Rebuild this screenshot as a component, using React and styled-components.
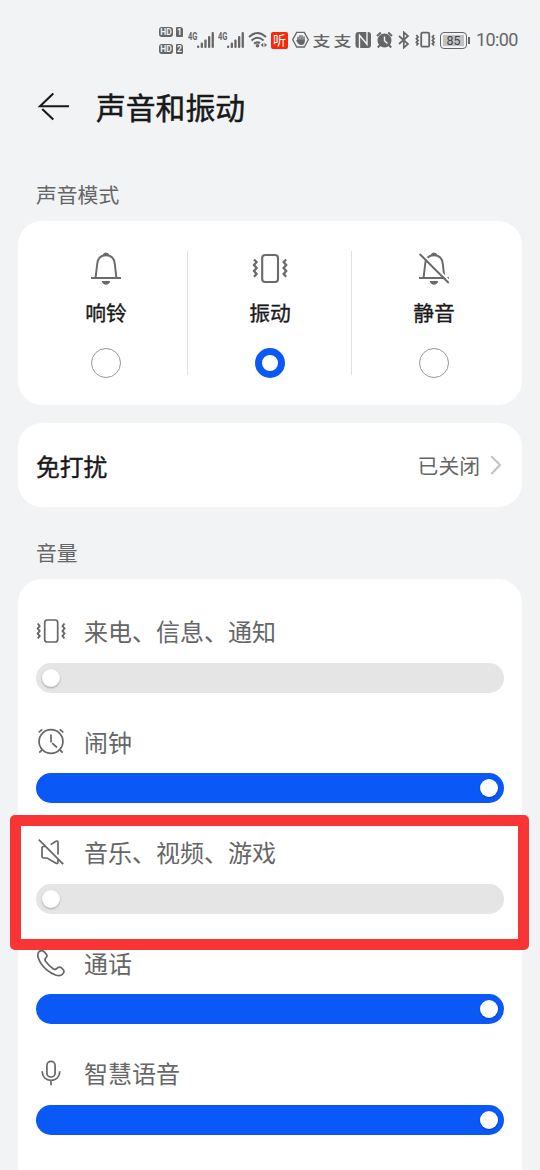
import styled, { createGlobalStyle } from "styled-components";

const modes = [
  { id: "ring", name: "响铃", icon: <BellIcon /> },
  { id: "vibrate", name: "振动", icon: <VibrateIcon />, checked: true },
  { id: "silent", name: "静音", icon: <BellIcon off /> },
];

const volumes = [
  { name: "来电、信息、通知", icon: <SmallVibrateIcon />, value: 0 },
  { name: "闹钟", icon: <AlarmIcon />, value: 100 },
  { name: "音乐、视频、游戏", icon: <SpeakerOffIcon />, value: 0, marked: true },
  { name: "通话", icon: <PhoneIcon />, value: 100 },
  { name: "智慧语音", icon: <MicIcon />, value: 100 },
];

const App = () => {
  return (
    <Page>
      <GlobalStyle />
      <StatusBar>
        <SimCards>
          <SimRow><Hd>HD</Hd><Sim>1</Sim></SimRow>
          <SimRow><Hd>HD</Hd><Sim>2</Sim></SimRow>
        </SimCards>
        <Signal />
        <Signal />
        <WifiIcon />
        <AppBadge>听</AppBadge>
        <HandIcon />
        <PayMark>支</PayMark>
        <PayMark>支</PayMark>
        <NfcIcon />
        <StatusAlarmIcon />
        <BluetoothIcon />
        <StatusVibrateIcon />
        <Battery><BatteryBody><span>85</span></BatteryBody><BatteryTip /></Battery>
        <Clock>10:00</Clock>
      </StatusBar>

      <Header>
        <svg width="32" height="30" viewBox="38 92 32 30" fill="none" stroke="#191919" strokeWidth="2.1">
          <path d="M53.3 93.5 40 106.3H69M42.2 108.9 53.3 119.6" />
        </svg>
        <Title>声音和振动</Title>
      </Header>

      <SectionLabel>声音模式</SectionLabel>
      <ModeCard>
        {modes.map((mode, i) => (
          <ModeCell key={mode.id}>
            {i > 0 && <Divider />}
            <Mode>
              {mode.icon}
              <ModeName>{mode.name}</ModeName>
              <Radio $checked={mode.checked} />
            </Mode>
          </ModeCell>
        ))}
      </ModeCard>

      <LinkCard>
        <LinkTitle>免打扰</LinkTitle>
        <LinkValue>已关闭</LinkValue>
        <svg width="12" height="22" viewBox="490 454 12 22" fill="none" stroke="#c2c2c2" strokeWidth="2">
          <path d="M491.3 456.2 500 465 491.3 474" />
        </svg>
      </LinkCard>

      <SectionLabel $second>音量</SectionLabel>
      <VolumeCard>
        {volumes.map((item) => (
          <VolumeRow key={item.name}>
            <VolumeHead>
              {item.icon}
              <VolumeName>{item.name}</VolumeName>
            </VolumeHead>
            <Track $full={item.value === 100}>
              <Knob />
            </Track>
            {item.marked && <Frame />}
          </VolumeRow>
        ))}
      </VolumeCard>
    </Page>
  );
};
export default App;

function BellIcon({ off }) {
  return (
    <svg width="34" height="36" viewBox="89 251 34 36" fill="none" stroke="#6b6b6b" strokeWidth="2">
      <path d="M95.6 277.5 97.2 264C97.7 258 101 255.2 106 255.2S114.3 258 114.8 264L116.4 277.5" />
      <path d="M91 278H121" />
      <path d="M102.7 255.3C103.5 251.5 108.5 251.5 109.3 255.3ZM101.8 281H110.2C109.3 286 102.7 286 101.8 281Z" fill="#6b6b6b" stroke="none" />
      {off && <path d="M93 252.5 122 281.5" stroke="#fff" strokeWidth="2" />}
      {off && <path d="M91.7 254 120.7 283" />}
    </svg>
  );
}

function VibrateIcon() {
  return (
    <svg width="36" height="36" viewBox="252 251 36 36" fill="none" stroke="#6b6b6b" strokeWidth="2.1">
      <rect x="262.2" y="255" width="15.8" height="27" rx="3" />
      <path d="M254 259.5 256.6 262 254 265 256.6 268 254 271 256.6 274 254 276.8M286.2 259.5 283.6 262 286.2 265 283.6 268 286.2 271 283.6 274 286.2 276.8" strokeWidth="2.3" />
    </svg>
  );
}

function SmallVibrateIcon() {
  return (
    <svg width="30" height="30" viewBox="36 616 30 30" fill="none" stroke="#666" strokeWidth="1.7">
      <rect x="44.7" y="620" width="13" height="22" rx="2.6" />
      <path d="M37.7 623.5 39.7 626 37.7 628.5 39.7 631 37.7 633.5 39.7 636 37.7 638.3M64.5 623.5 62.5 626 64.5 628.5 62.5 631 64.5 633.5 62.5 636 64.5 638.3" strokeWidth="1.9" />
    </svg>
  );
}

function AlarmIcon() {
  return (
    <svg width="30" height="30" viewBox="36 727 30 30" fill="none" stroke="#666" strokeWidth="1.7">
      <circle cx="51" cy="741.5" r="11.9" />
      <path d="M51 734.5V742.5M52.2 743.2 57 747.5M38.7 732.3 42.3 729.3M63.3 732.3 59.7 729.3M42 749.8 39.3 752.7M60 749.8 62.7 752.7" />
    </svg>
  );
}

function SpeakerOffIcon() {
  return (
    <svg width="30" height="30" viewBox="36 837 30 30" fill="none" stroke="#666" strokeWidth="1.7">
      <path d="M45 846.5H43.5Q42 846.5 42 848V856.5Q42 858 43.5 858H47L56 863.2Q58 864 58 862V859.5M50.7 844.6 56 841.3Q58 840.4 58 842.5V854.5" />
      <path d="M38.8 839.7 63.2 864.2" />
    </svg>
  );
}

function PhoneIcon() {
  return (
    <svg width="30" height="30" viewBox="36 948 30 30" fill="none" stroke="#666" strokeWidth="1.7">
      <path d="M39.5 951.2Q41.8 949.7 44 951.7L46.2 954Q47.8 956 46 957.7C44.5 959 44.7 960 45.7 961.5Q49.5 966.5 53.5 969C55 969.9 55.9 969.8 57 968.3Q58.8 966.2 61 967.5L63.3 969.7Q64.8 971.8 63 973.7C61 976 58.5 976 55.5 975Q46.5 971.5 41 963.5C38.5 959.5 36.3 954 39.5 951.2Z" />
    </svg>
  );
}

function MicIcon() {
  return (
    <svg width="30" height="30" viewBox="36 1058 30 30" fill="none" stroke="#666" strokeWidth="1.7">
      <rect x="46.9" y="1061.3" width="8.2" height="15.7" rx="4.1" />
      <path d="M42.2 1071.3C42.2 1077 46 1080.4 51 1080.4S59.8 1077 59.8 1071.3M51 1080.4V1085.3" />
    </svg>
  );
}

function Signal() {
  return (
    <SignalBox>
      <small>4G</small>
      <svg width="18" height="17" viewBox="0 0 18 17" fill="#666">
        <rect x="0" y="13.5" width="2.3" height="2.5" rx="1" />
        <rect x="3.7" y="10.5" width="2.3" height="5.5" rx="1" />
        <rect x="7.3" y="7.5" width="2.3" height="8.5" rx="1" />
        <rect x="11" y="4" width="2.3" height="12" rx="1" />
        <rect x="14.6" y="0" width="2.3" height="16" rx="1" />
      </svg>
    </SignalBox>
  );
}

function WifiIcon() {
  return (
    <svg width="19" height="18" viewBox="248.500 30.500 19 18" fill="none" stroke="#666" strokeWidth="2">
      <path d="M249.5 36.5Q258 28.5 266.5 36.5M252 40Q258 34.6 264 40M254.7 43.3Q258 40.7 260.5 42.8" />
      <circle cx="258" cy="45.3" r="1.8" fill="#666" stroke="none" />
      <path d="M263.8 42.3V46.7L261.2 44.5ZM265 42.3V46.7L267.6 44.5Z" fill="#666" stroke="none" />
    </svg>
  );
}

function HandIcon() {
  return (
    <svg width="17" height="18" viewBox="292 31 17 18" fill="none" stroke="#666" strokeWidth="1.3">
      <path d="M296.7 32.4H304.3L308.3 39.7 304.3 47H296.7L292.7 39.7Z" />
      <path d="M298 41V37.3M300 40V35.6M302 40V35.6M304 41V37" strokeWidth="1.4" strokeLinecap="round" />
      <path d="M297.3 39.5H304.7V41.5Q304.7 45 301 45 298.8 45 296.2 40.7Z" fill="#666" stroke="none" />
    </svg>
  );
}

function NfcIcon() {
  return (
    <svg width="17" height="18" viewBox="355.5 30.5 17 18">
      <rect x="356" y="31.5" width="15.5" height="16" rx="3" fill="#666" />
      <path d="M360 47.5V34.8L367.5 43.8V31.5" fill="none" stroke="#f1f3f5" strokeWidth="1.4" />
    </svg>
  );
}

function StatusAlarmIcon() {
  return (
    <svg width="17" height="18" viewBox="376.5 30.5 17 18" fill="none" stroke="#666" strokeWidth="1.9">
      <circle cx="385" cy="40" r="7" fill="#666" stroke="none" />
      <path d="M377.5 35.5 381.3 32M392.5 35.5 388.7 32M380.5 44.5 378.3 47M389.5 44.5 391.7 47" />
      <path d="M385 36V40.3L388 43" stroke="#f1f3f5" strokeWidth="1.4" />
    </svg>
  );
}

function BluetoothIcon() {
  return (
    <svg width="14" height="18" viewBox="397.5 30.5 14 18" fill="none" stroke="#666" strokeWidth="1.7">
      <path d="M399.5 35.5 408.5 43.5 404.3 47.2V31.8L408.5 35.5 399.5 43.5" />
    </svg>
  );
}

function StatusVibrateIcon() {
  return (
    <svg width="21" height="18" viewBox="414.5 30.5 21 18" fill="none" stroke="#666" strokeWidth="1.8">
      <rect x="420.7" y="32.2" width="8" height="14" rx="1.3" />
      <path d="M415.9 34.5 417.5 36.5 415.9 38.3 417.5 40 415.9 41.7 417.5 43.3 415.9 45M433.5 34.5 431.9 36.5 433.5 38.3 431.9 40 433.5 41.7 431.9 43.3 433.5 45" />
    </svg>
  );
}

const GlobalStyle = createGlobalStyle`
  body {
    margin: 0;
    background: #f1f3f5;
    font-family: "Noto Sans CJK SC", sans-serif;
  }
  svg {
    display: block;
    flex: none;
  }
`;

const Page = styled.div`
  width: 540px;
  height: 1170px;
  overflow: hidden;
  background: #f1f3f5;
  color: #191919;
`;

const StatusBar = styled.div`
  display: flex;
  align-items: center;
  gap: 4px;
  height: 80px;
  box-sizing: border-box;
  padding-left: 159px;
  color: #666;
`;

const SimCards = styled.div`
  display: flex;
  flex-direction: column;
  gap: 7px;
  width: 25px;
`;

const SimRow = styled.div`
  display: flex;
  gap: 3px;
`;

const Hd = styled.span`
  width: 14px;
  height: 10px;
  border-radius: 3px;
  background: #666;
  color: #f1f3f5;
  font: bold 8.5px/10px Roboto, sans-serif;
  text-align: center;
`;

const Sim = styled(Hd)`
  width: 7px;
  border-radius: 1px 3px 1px 1px;
`;

const SignalBox = styled.div`
  display: flex;
  width: 26px;
  height: 17px;

  small {
    width: 9px;
    font: bold 10px/9px Roboto, sans-serif;
    transform: scaleX(0.75);
    transform-origin: left;
  }
`;

const AppBadge = styled.span`
  width: 17px;
  height: 17px;
  border-radius: 2px;
  background: #f62a0a;
  color: #fff;
  font-size: 13px;
  line-height: 16px;
  text-align: center;
`;

const PayMark = styled.span`
  display: flex;
  justify-content: center;
  width: 17px;
  font-size: 18px;
  font-weight: 500;
  line-height: 18px;
  transform: scaleY(0.75);
`;

const Battery = styled.div`
  display: flex;
  align-items: center;
  gap: 1px;
  width: 32px;
`;

const BatteryBody = styled.div`
  width: 27px;
  height: 17px;
  box-sizing: border-box;
  padding: 2px;
  border: 1.5px solid #666;
  border-radius: 4px;

  span {
    display: block;
    height: 11px;
    background: #c1c2c3;
    color: #444;
    font: 12.5px/12px Roboto, sans-serif;
    text-align: center;
  }
`;

const BatteryTip = styled.div`
  width: 2px;
  height: 7px;
  background: #666;
`;

const Clock = styled.span`
  font: 18px/24px Roboto, sans-serif;
  letter-spacing: -0.6px;
`;

const Header = styled.header`
  display: flex;
  align-items: center;
  gap: 26px;
  height: 54px;
  padding-left: 38px;
`;

const Title = styled.h1`
  margin: 0;
  font-size: 29.8px;
  font-weight: 400;
  line-height: 52px;
  padding-bottom: 2px;
  -webkit-text-stroke: 0.5px;
`;

const SectionLabel = styled.h2`
  margin: ${(props) => (props.$second ? "30px 36px 12px" : "45px 36px 12px")};
  color: #666;
  font-size: 20.8px;
  font-weight: 400;
  line-height: 30px;
`;

const Card = styled.section`
  display: flex;
  box-sizing: border-box;
  margin: 0 18px;
  border-radius: 24px;
  background: #fff;
`;

const ModeCard = styled(Card)`
  height: 184px;
  padding: 30px 6px 0;
`;

const ModeCell = styled.div`
  display: flex;
  width: 164px;
`;

const Divider = styled.div`
  width: 1px;
  height: 124px;
  margin-left: -1px;
  background: #e0e0e0;
`;

const Mode = styled.div`
  display: flex;
  flex-direction: column;
  align-items: center;
  width: 164px;
`;

const ModeName = styled.span`
  margin-top: 10px;
  font-size: 20.8px;
  line-height: 30px;
  -webkit-text-stroke: 0.35px;
`;

const Radio = styled.span`
  width: 30px;
  height: 30px;
  box-sizing: border-box;
  margin-top: 21px;
  border: ${(props) => (props.$checked ? "7.5px solid #0a59f7" : "1.5px solid #999")};
  border-radius: 50%;
`;

const LinkCard = styled(Card)`
  align-items: center;
  height: 84px;
  margin-top: 18px;
  padding: 0 20px 0 18px;
`;

const LinkTitle = styled.span`
  flex: 1;
  font-size: 23.8px;
  -webkit-text-stroke: 0.4px;
`;

const LinkValue = styled.span`
  margin-right: 10px;
  color: #666;
  font-size: 20.8px;
`;

const VolumeCard = styled(Card)`
  flex-direction: column;
  gap: 31px;
  height: 640px;
  padding: 34px 18px 0;
`;

const VolumeRow = styled.div`
  position: relative;
`;

const VolumeHead = styled.div`
  display: flex;
  align-items: center;
  gap: 18px;
  height: 36px;
`;

const VolumeName = styled.span`
  color: #666;
  font-size: 24px;
  line-height: 36px;
`;

const Track = styled.div`
  display: flex;
  align-items: center;
  justify-content: ${(props) => (props.$full ? "flex-end" : "flex-start")};
  height: 30px;
  box-sizing: border-box;
  margin-top: 13.5px;
  padding: 0 6px;
  border-radius: 15px;
  background: ${(props) => (props.$full ? "#0a59f7" : "#e5e5e5")};
`;

const Knob = styled.span`
  width: 18px;
  height: 18px;
  border-radius: 50%;
  background: #fff;
  box-shadow: 0 1px 2px rgba(0, 0, 0, 0.3);
`;

// red marker drawn over the music row
const Frame = styled.div`
  position: absolute;
  top: -19px;
  left: -26px;
  z-index: 1;
  width: 519px;
  height: 135px;
  box-sizing: border-box;
  border: 11px solid #f93434;
  border-radius: 5px;
`;
